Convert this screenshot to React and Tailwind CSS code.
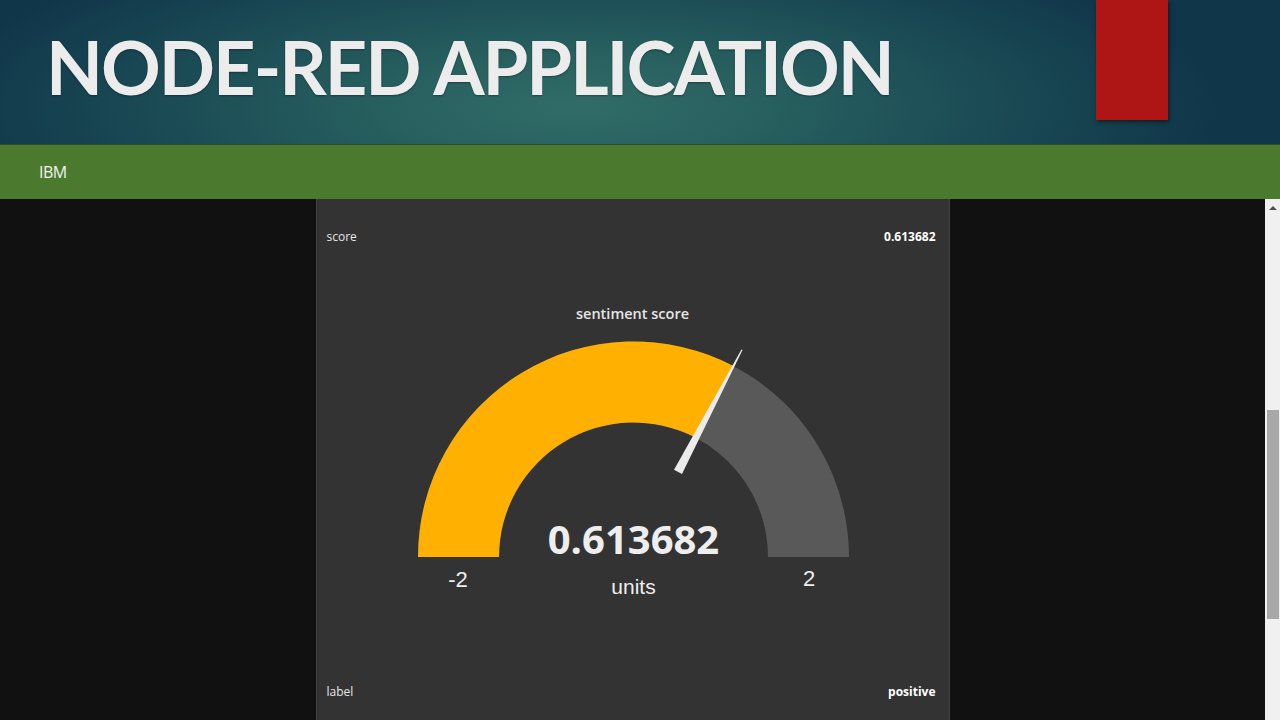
import React from 'react';

const MIN = -2;
const MAX = 2;
const VALUE = 0.613682;

// gauge geometry, in svg coords
const CX = 316.5;
const CY = 233;
const R_OUT = 215.5;
const R_IN = 134.5;

function pt(r, frac) {
  const a = Math.PI * frac;
  return [CX - r * Math.cos(a), CY - r * Math.sin(a)];
}

function arcPath(f0, f1) {
  const [x0, y0] = pt(R_OUT, f0);
  const [x1, y1] = pt(R_OUT, f1);
  const [x2, y2] = pt(R_IN, f1);
  const [x3, y3] = pt(R_IN, f0);
  return `M${x0} ${y0} A${R_OUT} ${R_OUT} 0 0 1 ${x1} ${y1} L${x2} ${y2} A${R_IN} ${R_IN} 0 0 0 ${x3} ${y3} Z`;
}

function needle(frac) {
  const a = Math.PI * frac;
  const dx = -Math.cos(a);
  const dy = -Math.sin(a);
  const px = -dy;
  const py = dx;
  const bx = CX + dx * 96;
  const by = CY + dy * 96;
  const tx = CX + dx * 234;
  const ty = CY + dy * 234;
  const w = 4.5;
  return `${bx + px * w},${by + py * w} ${tx + px * 0.6},${ty + py * 0.6} ${tx - px * 0.6},${ty - py * 0.6} ${bx - px * w},${by - py * w}`;
}

function Gauge() {
  const frac = (VALUE - MIN) / (MAX - MIN);
  return (
    <svg width="634" height="290" viewBox="0 0 634 290" className="block">
      <path d={arcPath(0, 1)} fill="#595959" />
      <path d={arcPath(0, frac)} fill="#ffb000" />
      <polygon points={needle(frac)} fill="#ececec" />
      <text x={CX} y={230} textAnchor="middle" fill="#eeeeee" fontSize="40" fontWeight="700" fontFamily="'Open Sans', sans-serif">
        {VALUE}
      </text>
      <text x={CX} y={270} textAnchor="middle" fill="#eeeeee" fontSize="21" fontFamily="'Liberation Sans', Arial, sans-serif">
        units
      </text>
      <text x={141} y={263} textAnchor="middle" fill="#eeeeee" fontSize="22" fontFamily="'Liberation Sans', Arial, sans-serif">
        -2
      </text>
      <text x={492} y={262} textAnchor="middle" fill="#eeeeee" fontSize="22" fontFamily="'Liberation Sans', Arial, sans-serif">
        2
      </text>
    </svg>
  );
}

export default function App() {
  return (
    <div className="w-[1280px] h-[720px] flex flex-col overflow-hidden bg-[#111111]">
      {/* Header */}
      <div className="relative h-[144px] shrink-0 bg-[radial-gradient(ellipse_50%_130%_at_45%_75%,#326c68_0%,#27605f_30%,#1b4b55_65%,#10364a_100%)]">
        <h1
          className="absolute left-[46px] top-[23px] text-[74px] font-bold leading-[88px] text-[#ececec] tracking-[-2px] [text-shadow:0_1px_2px_rgba(0,0,0,0.35)]"
          style={{ fontFamily: "Lato, sans-serif" }}
        >
          NODE-RED APPLICATION
        </h1>
        <div className="absolute left-[1096px] top-0 w-[72px] h-[120px] bg-[#ae1515] shadow-[1px_2px_4px_rgba(0,0,0,0.5)]" />
      </div>

      {/* Toolbar */}
      <div className="h-[55px] shrink-0 bg-[#4b7a2f] border-t border-[#2f4f1e] flex items-center pl-[39px]">
        <span className="text-[16px] text-[#f2f2f2] font-['Open_Sans',sans-serif] tracking-[-0.5px]">IBM</span>
      </div>

      {/* Content */}
      <div className="flex-1 flex min-h-0">
        <div className="flex-1 flex justify-center">
          <div className="w-[634px] bg-[#333333] border-x border-[#444444] flex flex-col font-['Open_Sans',sans-serif]">
            <div className="mt-[26px] h-[24px] pl-[10px] pr-[13px] flex items-center justify-between text-[12px] text-[#e6e6e6]">
              <span>score</span>
              <span className="font-bold text-white">0.613682</span>
            </div>
            <div className="mt-[55px] h-[20px] flex items-center justify-center text-[14.5px] font-semibold text-[#e6e6e6]">
              sentiment score
            </div>
            <Gauge />
            <div className="mt-auto mb-[16px] h-[24px] pl-[10px] pr-[13px] flex items-center justify-between text-[12px] text-[#e6e6e6]">
              <span>label</span>
              <span className="font-bold text-white">positive</span>
            </div>
          </div>
        </div>

        {/* Scrollbar */}
        <div className="w-[15px] bg-[#f0f0f0] flex flex-col items-center">
          <div className="h-[17px] w-full flex items-center justify-center">
            <div className="w-0 h-0 border-x-[4px] border-x-transparent border-b-[4px] border-b-[#505050]" />
          </div>
          <div className="mt-[194px] w-[12px] h-[209px] bg-[#a8a8a8]" />
        </div>
      </div>
    </div>
  );
}
